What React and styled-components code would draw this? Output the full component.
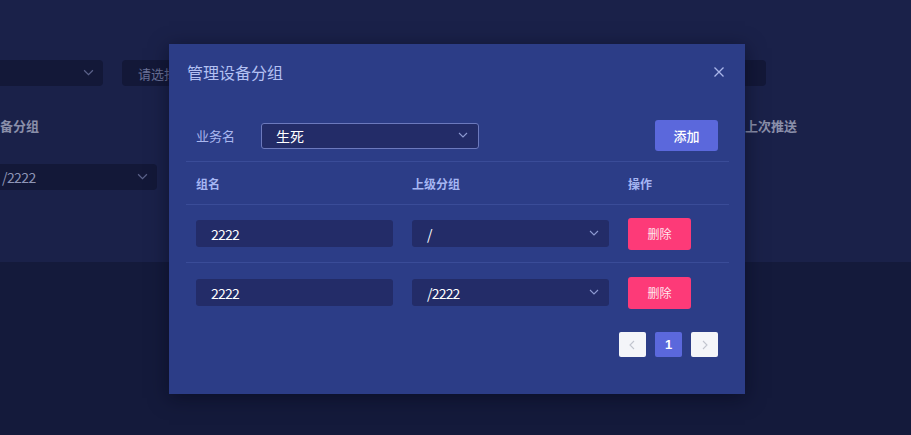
import styled, { createGlobalStyle } from "styled-components";

const GlobalStyle = createGlobalStyle`
  html, body {
    margin: 0;
    padding: 0;
    background: #141a3b;
    font-family: "Noto Sans CJK SC", "Liberation Sans", sans-serif;
  }
  * {
    box-sizing: border-box;
  }
`;

const Page = styled.div`
  position: relative;
  width: 911px;
  height: 435px;
  overflow: hidden;
  background: #141a3b;
`;

const TopPanel = styled.div`
  height: 262px;
  margin-left: -30px;
  padding-top: 60px;
  background: #1a2149;
  display: flex;
  flex-direction: column;
`;

const FilterRow = styled.div`
  display: flex;
  gap: 19px;
  padding-right: 145px;
  height: 26px;
`;

const DimBox = styled.div`
  display: flex;
  align-items: center;
  justify-content: space-between;
  width: ${(p) => p.$w}px;
  height: 26px;
  margin-left: ${(p) => (p.$push ? "auto" : "0")};
  padding: 0 9px 0 ${(p) => p.$pad || 16}px;
  border-radius: 4px;
  background: #131838;
  color: #6a7197;
  font-size: 13px;
`;

const FieldRow = styled.div`
  display: flex;
  gap: 588px;
  margin-top: 31px;
`;

const Field = styled.div`
  display: flex;
  flex-direction: column;
  gap: 29px;
  width: ${(p) => p.$w}px;
`;

const FieldLabel = styled.div`
  padding-left: ${(p) => p.$pad || 0}px;
  height: 18px;
  line-height: 18px;
  font-size: 13px;
  font-weight: bold;
  color: #8a8fa9;
  white-space: nowrap;
`;

const DimValue = styled.span`
  color: #8e95b6;
  font-size: 14px;
  letter-spacing: -0.6px;
`;

const Overlay = styled.div`
  position: absolute;
  inset: 0;
  display: flex;
  align-items: center;
  justify-content: center;
  padding: 3px 0 0 3px;
`;

const Modal = styled.div`
  width: 576px;
  height: 350px;
  background: #2c3d87;
  box-shadow: 0 4px 18px rgba(5, 8, 25, 0.55);
  display: flex;
  flex-direction: column;
`;

const ModalHeader = styled.div`
  display: flex;
  align-items: flex-start;
  justify-content: space-between;
  height: 69px;
  padding: 17px 21px 0 18px;
`;

const Title = styled.div`
  font-size: 16px;
  line-height: 22px;
  color: #b4c1f3;
`;

const CloseButton = styled.div`
  width: 10px;
  height: 22px;
  display: flex;
  align-items: center;
  color: #aab6ea;
`;

const ModalBody = styled.div`
  padding: 0 16px 0 17px;
  display: flex;
  flex-direction: column;
`;

const Toolbar = styled.div`
  display: flex;
  align-items: center;
  padding: 7px 11px 10px 10px;
  border-bottom: 1px solid #3a4c98;
`;

const ToolLabel = styled.div`
  width: 65px;
  font-size: 13px;
  color: #a9b7ef;
`;

const Select = styled.div`
  display: flex;
  align-items: center;
  justify-content: space-between;
  width: ${(p) => p.$w || 197}px;
  height: ${(p) => (p.$bordered ? 26 : 27)}px;
  padding: 0 10px 0 ${(p) => (p.$bordered ? 14 : 15)}px;
  border-radius: 3px;
  background: #232c68;
  border: ${(p) => (p.$bordered ? "1px solid #6c79bd" : "none")};
  color: #ffffff;
  font-size: 14px;
  letter-spacing: ${(p) => (p.$bordered ? "0" : "-0.8px")};
`;

const Button = styled.button`
  width: 63px;
  height: ${(p) => p.$h}px;
  margin-left: ${(p) => (p.$push ? "auto" : "0")};
  border: none;
  border-radius: 3px;
  background: ${(p) => p.$bg};
  color: ${(p) => p.$fg};
  font-family: inherit;
  font-size: ${(p) => p.$size}px;
  font-weight: ${(p) => p.$weight || "normal"};
  cursor: pointer;
`;

const TableRow = styled.div`
  display: grid;
  grid-template-columns: 216px 216px 1fr;
  align-items: center;
  height: ${(p) => p.$h}px;
  padding-left: 10px;
  border-bottom: ${(p) => (p.$line ? "1px solid #3a4c98" : "none")};
`;

const HeadCell = styled.div`
  font-size: 12px;
  font-weight: bold;
  color: #a6b6f3;
`;

const Pager = styled.div`
  display: flex;
  justify-content: flex-end;
  gap: 9px;
  margin-top: 10px;
  padding-right: 11px;
`;

const PageItem = styled.div`
  width: 27px;
  height: 25px;
  border-radius: 2px;
  display: flex;
  align-items: center;
  justify-content: center;
  background: ${(p) => (p.$active ? "#5b68dc" : "#f4f5f9")};
  color: ${(p) => (p.$active ? "#ffffff" : "#b9bcc8")};
  font-family: "Liberation Sans", sans-serif;
  font-size: 13px;
  font-weight: bold;
`;

const Chevron = ({ dir = "down", color = "#8e9ad2", size = 10 }) => {
  const points = {
    down: "1,2 5,6 9,2",
    left: "6,1 2,5 6,9",
    right: "3,1 7,5 3,9",
  }[dir];
  return (
    <svg width={size} height={size} viewBox="0 0 10 10" fill="none">
      <polyline points={points} stroke={color} strokeWidth="1.1" />
    </svg>
  );
};

const rows = [
  { name: "2222", parent: "/" },
  { name: "2222", parent: "/2222" },
];

export default function App() {
  return (
    <Page>
      <GlobalStyle />
      <TopPanel>
        <FilterRow>
          <DimBox $w={133}>
            <span />
            <Chevron color="#5b628a" size={11} />
          </DimBox>
          <DimBox $w={200}>请选择</DimBox>
          <DimBox $w={200} $push />
        </FilterRow>
        <FieldRow>
          <Field $w={187}>
            <FieldLabel $pad={17}>设备分组</FieldLabel>
            <DimBox $w={187} $pad={32}>
              <DimValue>/2222</DimValue>
              <Chevron color="#5b628a" size={11} />
            </DimBox>
          </Field>
          <Field $w={120}>
            <FieldLabel>上次推送</FieldLabel>
          </Field>
        </FieldRow>
      </TopPanel>

      <Overlay>
        <Modal>
          <ModalHeader>
            <Title>管理设备分组</Title>
            <CloseButton>
              <svg width="10" height="10" viewBox="0 0 10 10">
                <path d="M0.5 0.5 L9.5 9.5 M9.5 0.5 L0.5 9.5" stroke="currentColor" strokeWidth="1.3" />
              </svg>
            </CloseButton>
          </ModalHeader>
          <ModalBody>
            <Toolbar>
              <ToolLabel>业务名</ToolLabel>
              <Select $w={218} $bordered>
                生死
                <Chevron />
              </Select>
              <Button $push $h={31} $bg="#5b68dc" $fg="#ffffff" $size={13} $weight={500}>
                添加
              </Button>
            </Toolbar>
            <TableRow $h={43} $line>
              <HeadCell>组名</HeadCell>
              <HeadCell>上级分组</HeadCell>
              <HeadCell>操作</HeadCell>
            </TableRow>
            {rows.map((r, i) => (
              <TableRow key={i} $h={i === 0 ? 58 : 59} $line={i === 0}>
                <Select>{r.name}</Select>
                <Select>
                  {r.parent}
                  <Chevron />
                </Select>
                <Button $h={32} $bg="#fd3a78" $fg="#ffe6ee" $size={12}>
                  删除
                </Button>
              </TableRow>
            ))}
            <Pager>
              <PageItem>
                <Chevron dir="left" color="#c2c5cf" />
              </PageItem>
              <PageItem $active>1</PageItem>
              <PageItem>
                <Chevron dir="right" color="#c2c5cf" />
              </PageItem>
            </Pager>
          </ModalBody>
        </Modal>
      </Overlay>
    </Page>
  );
}
